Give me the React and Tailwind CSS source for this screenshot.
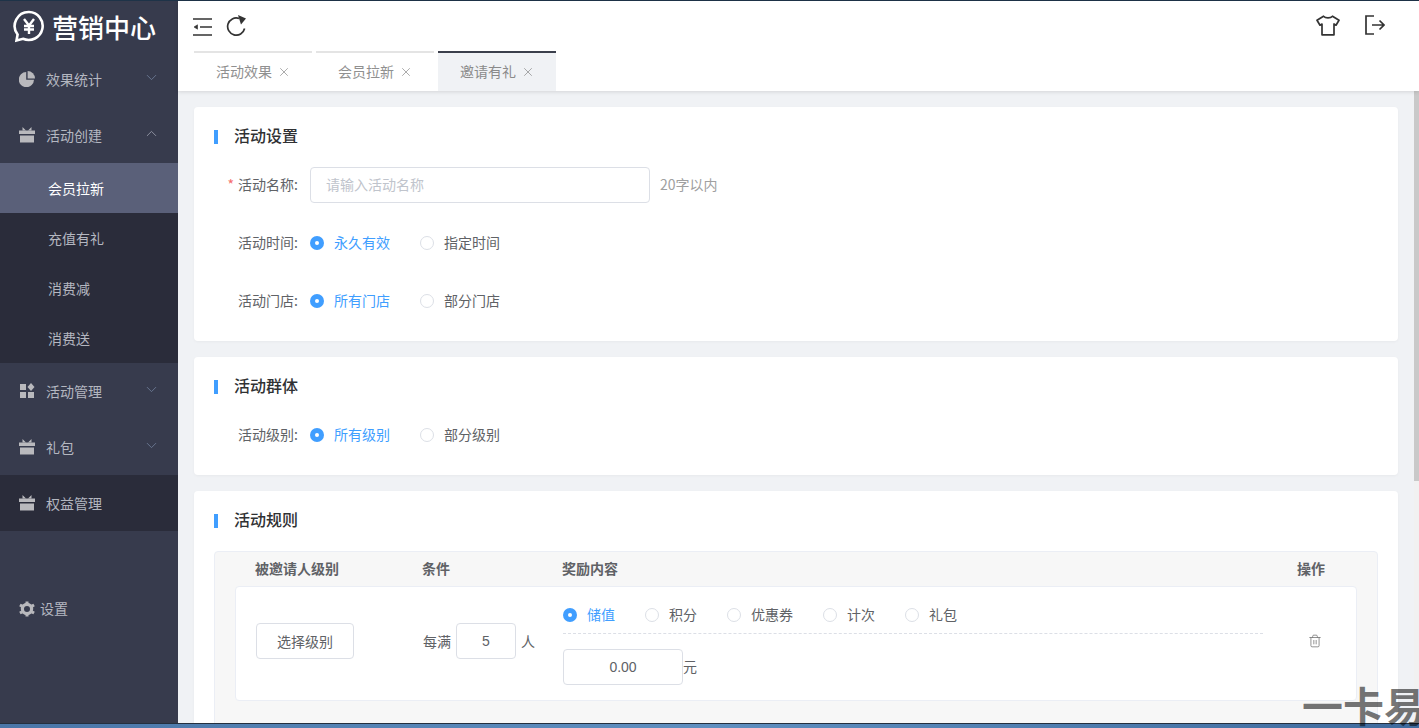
import React from "react";
import { ChevronDown, ChevronUp, Trash2, X } from "lucide-react";

const GiftIcon = () => (
  <svg width="16" height="16" viewBox="0 0 16 16" fill="currentColor" className="shrink-0">
    <path d="M3.5 0 L7 3.5 H3.5 Z M12.5 0 L9 3.5 H12.5 Z" />
    <path d="M0 3.5 H16 V7 H0 Z" />
    <path d="M1 8.5 H15 V15.5 H1 Z" />
  </svg>
);

const PieIcon = () => (
  <svg width="16" height="16" viewBox="0 0 16 16" fill="currentColor" className="shrink-0">
    <path d="M7.2 1 V8.8 H15 A7.6 7.6 0 1 1 7.2 1 Z" />
    <path d="M8.6 0 A7.4 7.4 0 0 1 16 7.4 L8.6 7.4 Z" />
  </svg>
);

const AppsIcon = () => (
  <svg width="16" height="16" viewBox="0 0 16 16" fill="currentColor" className="shrink-0">
    <rect x="1" y="1" width="6" height="6" />
    <rect x="1" y="9" width="6" height="6" />
    <rect x="9" y="9" width="6" height="6" />
    <path d="M12 0 L15.5 4 L12 8 L8.5 4 Z" />
  </svg>
);

const GearIcon = () => (
  <svg width="16" height="16" viewBox="0 0 16 16" className="shrink-0">
    <circle cx="8" cy="8" r="4.6" fill="none" stroke="currentColor" strokeWidth="3.2" />
    <path
      d="M8 0.5 V3 M8 13 V15.5 M0.9 4 L3.2 5.2 M12.8 10.8 L15.1 12 M0.9 12 L3.2 10.8 M12.8 5.2 L15.1 4"
      stroke="currentColor"
      strokeWidth="3"
    />
  </svg>
);

const MenuItem = ({ icon, label, open, hasArrow = true, dark }) => (
  <div className={`h-14 flex items-center pl-[19px] pr-[18px] text-[#b4b7c0] text-sm ${dark ? "bg-[#2a2c3a]" : ""}`}>
    <span className="w-[27px] flex text-[#b9b9bd]">{icon}</span>
    <span className="flex-1">{label}</span>
    {hasArrow &&
      (open ? (
        <ChevronUp size={17} strokeWidth={1.2} className="text-[#9a9dab] -mt-[4px]" />
      ) : (
        <ChevronDown size={17} strokeWidth={1.2} className="text-[#6f7d98] -mt-[4px]" />
      ))}
  </div>
);

const SubItem = ({ label, active }) => (
  <div className={`h-[50px] flex items-center pl-12 text-sm ${active ? "bg-[#5a6079] text-white" : "text-[#b4b7c0]"}`}>
    {label}
  </div>
);

const Sidebar = () => (
  <aside className="w-[178px] shrink-0 bg-[#373b4d] flex flex-col">
    <div className="h-[51px] flex items-center pl-[13px] text-white">
      <svg width="32" height="33" viewBox="0 0 32 33" fill="none" stroke="currentColor" className="shrink-0">
        <path d="M16 2 A14 14 0 1 1 10 28.8 L3.5 30.5 L4.6 24.5 A14 14 0 0 1 16 2 Z" strokeWidth="2.6" />
        <path d="M11 9 L16 15.5 L21 9 M16 15.5 V24 M11 16 H21 M11 19.5 H21" strokeWidth="2.4" />
      </svg>
      <span className="ml-[7px] text-[26px] leading-none font-medium whitespace-nowrap">营销中心</span>
    </div>
    <div className="-mt-px flex flex-col">
      <MenuItem icon={<PieIcon />} label="效果统计" />
      <MenuItem icon={<GiftIcon />} label="活动创建" open />
      <SubItem label="会员拉新" active />
      <div className="bg-[#2a2c3a]">
        <SubItem label="充值有礼" />
        <SubItem label="消费减" />
        <SubItem label="消费送" />
      </div>
      <MenuItem icon={<AppsIcon />} label="活动管理" />
      <MenuItem icon={<GiftIcon />} label="礼包" />
      <MenuItem icon={<GiftIcon />} label="权益管理" hasArrow={false} dark />
      <div className="mt-[64px] h-7 flex items-center pl-[19px] text-sm text-[#b4b7c0]">
        <span className="w-[21px] flex text-[#b9b9bd]"><GearIcon /></span>
        <span className="mb-[2px]">设置</span>
      </div>
    </div>
  </aside>
);

const Tab = ({ label, active }) => (
  <div
    className={`w-[118px] h-10 flex items-center pl-[22px] text-sm border-t-2 ${
      active ? "border-[#3b3f4c] bg-[#f0f2f5] text-[#8a8a8a]" : "border-[#e4e4e4] text-[#909090]"
    }`}
  >
    <span className="mb-[2px]">{label}</span>
    <X size={14} strokeWidth={1} className="ml-[5px] text-[#707070]" />
  </div>
);

const Header = () => (
  <header className="bg-white shadow-[0_1px_4px_rgba(0,0,0,0.12)] relative">
    <div className="h-[50px] flex items-center pl-[15px] pr-[34px] text-[#333]">
      <svg width="20" height="18" viewBox="0 0 20 18" fill="none" stroke="currentColor" strokeWidth="1.6" className="mt-[1px]">
        <path d="M0 1 H19 M7 9 H19 M0 17 H19" />
        <path d="M4.5 6.8 L1 9 L4.5 11.2 Z" fill="currentColor" strokeWidth="0.6" />
      </svg>
      <svg width="21" height="21" viewBox="0 0 21 21" fill="none" stroke="currentColor" strokeWidth="1.7" className="ml-[13px] -mt-[2px]">
        <path d="M18.6 13.5 A8.6 8.6 0 1 1 13 3.4" />
        <path d="M12 0 L20 3.6 L15 9.5 Z" fill="currentColor" stroke="none" />
      </svg>
      <svg width="24" height="21" viewBox="0 0 24 21" fill="none" stroke="currentColor" strokeWidth="1.7" strokeLinejoin="round" className="ml-auto -mt-[2px]">
        <path d="M7.5 1.2 C9.5 3.4 14.5 3.4 16.5 1.2 L23 5.2 L20 10.2 L18 9 V19.8 H6 V9 L4 10.2 L1 5.2 Z" />
      </svg>
      <svg width="20" height="20" viewBox="0 0 20 20" fill="none" stroke="currentColor" strokeWidth="1.7" className="ml-[25px] -mt-[2px]">
        <path d="M9 1 H1 V19 H9" />
        <path d="M7 10 H19 M14.5 5.5 L19 10 L14.5 14.5" />
      </svg>
    </div>
    <div className="pl-4 flex gap-1">
      <Tab label="活动效果" />
      <Tab label="会员拉新" />
      <Tab label="邀请有礼" active />
    </div>
  </header>
);

const Card = ({ title, children }) => (
  <section className="bg-white rounded-[4px] pt-[19px] pl-5 pr-5 shadow-[0_1px_3px_rgba(0,0,0,0.04)]">
    <div className="h-5 flex items-center text-base font-medium text-[#303133]">
      <span className="w-1 h-3.5 bg-[#409eff] mr-4 mt-0.5" />
      <span className="mb-[2px]">{title}</span>
    </div>
    {children}
  </section>
);

const Radio = ({ label, checked }) => (
  <span className={`flex items-center text-sm mr-[30px] ${checked ? "text-[#409eff]" : "text-[#606266]"}`}>
    {checked ? (
      <span className="w-3.5 h-3.5 rounded-full bg-[#409eff] flex items-center justify-center mr-2.5">
        <span className="w-1 h-1 rounded-full bg-white" />
      </span>
    ) : (
      <span className="w-3.5 h-3.5 rounded-full border border-[#dcdfe6] mr-2.5" />
    )}
    <span className="mb-[2px]">{label}</span>
  </span>
);

const Row = ({ label, required, children, top = "mt-[22px]" }) => (
  <div className={`h-9 flex items-center ${top}`}>
    <label className="w-[84px] pb-[2px] text-right text-sm text-[#606266] mr-3 whitespace-nowrap">
      {required && <span className="text-[#f56c6c] mr-1">*</span>}
      {label}
    </label>
    {children}
  </div>
);

const RuleTable = () => (
  <div className="mt-[21px] border border-[#ebeef5] rounded-[4px] bg-[#f7f7f7] px-5 h-[200px]">
    <div className="h-[34px] pb-[2px] flex items-center text-sm font-bold text-[#606266]">
      <span className="w-[187px] pl-5">被邀请人级别</span>
      <span className="w-[140px]">条件</span>
      <span className="flex-1">奖励内容</span>
      <span className="mr-[32px]">操作</span>
    </div>
    <div className="h-[115px] bg-white border border-[#ebeef5] rounded-[4px] flex">
      <div className="w-[186px] pl-5 flex items-center pb-[6px]">
        <button className="w-[98px] h-9 border border-[#dcdfe6] rounded-[4px] text-sm text-[#606266]">选择级别</button>
      </div>
      <div className="w-[141px] flex items-center pb-[6px] text-sm text-[#606266]">
        <span className="ml-px">每满</span>
        <span className="w-[60px] h-9 mx-[5px] border border-[#dcdfe6] rounded-[4px] flex items-center justify-center font-['Liberation_Sans',sans-serif] text-sm">5</span>
        <span>人</span>
      </div>
      <div className="w-[700px]">
        <div className="h-[47px] pt-[9px] flex items-center border-b border-dashed border-[#dcdfe6]">
          <Radio label="储值" checked />
          <Radio label="积分" />
          <Radio label="优惠券" />
          <Radio label="计次" />
          <Radio label="礼包" />
        </div>
        <div className="mt-[15px] flex items-center text-sm text-[#606266]">
          <span className="w-[120px] h-9 border border-[#dcdfe6] rounded-[4px] flex items-center justify-center font-['Liberation_Sans',sans-serif] text-sm">0.00</span>
          <span className="mb-[2px]">元</span>
        </div>
      </div>
      <div className="flex-1 flex items-center justify-end pr-[34px] pb-[5px]">
        <Trash2 size={14} strokeWidth={1.3} className="text-[#707070]" />
      </div>
    </div>
  </div>
);

export default function App() {
  return (
    <div className="h-[728px] w-[1419px] overflow-hidden flex flex-col relative font-['Noto_Sans_CJK_SC','Noto_Sans',sans-serif]">
      <div className="h-px shrink-0 bg-[#1e3348]" />
      <div className="flex-1 min-h-0 flex">
        <Sidebar />
        <div className="flex-1 min-w-0 flex flex-col bg-[#f0f2f5]">
          <Header />
          <div className="flex-1 min-h-0 flex">
            <main className="flex-1 min-w-0 overflow-hidden px-4 pt-4 flex flex-col gap-4">
              <Card title="活动设置">
                <Row label="活动名称:" required top="mt-[21px]">
                  <span className="w-[340px] h-9 border border-[#dcdfe6] rounded-[4px] pl-[15px] pb-[2px] flex items-center text-sm text-[#c0c4cc]">请输入活动名称</span>
                  <span className="ml-2.5 pb-[2px] text-[#a0a0a0] text-sm">20字以内</span>
                </Row>
                <Row label="活动时间:">
                  <Radio label="永久有效" checked />
                  <Radio label="指定时间" />
                </Row>
                <Row label="活动门店:">
                  <Radio label="所有门店" checked />
                  <Radio label="部分门店" />
                </Row>
                <div className="h-[22px]" />
              </Card>
              <Card title="活动群体">
                <Row label="活动级别:" top="mt-[21px]">
                  <Radio label="所有级别" checked />
                  <Radio label="部分级别" />
                </Row>
                <div className="h-[22px]" />
              </Card>
              <Card title="活动规则">
                <RuleTable />
              </Card>
            </main>
            <div className="w-[5px] shrink-0 bg-[#f1f1f1]">
              <div className="h-[390px] bg-[#c9c9c9]" />
            </div>
          </div>
        </div>
      </div>
      <div className="h-[5px] shrink-0 border-t border-[#24303f] bg-gradient-to-r from-[#4a76a8] via-[#5f8fc0] to-[#3f6b9e]" />
      <span className="absolute left-[1302px] top-[684px] text-[41px] leading-none font-bold text-black/55 whitespace-nowrap">一卡易</span>
    </div>
  );
}
